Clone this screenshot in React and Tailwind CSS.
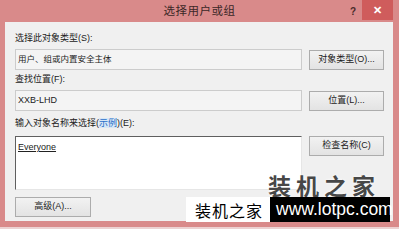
import React from "react";

const font = { fontFamily: '"Liberation Sans","Noto Sans CJK SC",sans-serif' };

function Btn({ children, className = "" }) {
  return (
    <div
      className={
        "h-[20px] flex items-center justify-center border border-[#acacac] bg-gradient-to-b from-[#f2f2f2] to-[#e3e3e3] text-[9px] text-[#222] " +
        className
      }
    >
      {children}
    </div>
  );
}

export default function App() {
  return (
    <div
      className="w-[399px] h-[229px] bg-[#d98a8a] flex flex-col relative overflow-hidden"
      style={font}
    >
      {/* title bar */}
      <div className="h-[22px] grid grid-cols-[1fr_auto_1fr] items-center shrink-0">
        <div />
        <div className="text-[11.5px] text-[#3b2727] tracking-[0.5px] pt-[1px]">选择用户或组</div>
        <div className="flex justify-end items-start h-full">
          <div className="text-[10px] font-bold text-[#4a2a2a] mt-[4px] mr-[6px]">?</div>
          <div className="w-[31px] h-[20px] bg-[#cf5c5c] flex items-center justify-center text-white text-[11px] font-bold mr-[6px]">
            ✕
          </div>
        </div>
      </div>

      {/* body */}
      <div className="flex-1 ml-[5px] mr-[6px] mb-[8px] bg-[#f0f0f0] pl-[10px] pr-[9px] pt-[10px] flex flex-col">
        <div className="h-[12px] leading-[12px] text-[9px] text-[#222]">选择此对象类型(S):</div>
        <div className="flex items-center gap-[7px] mt-[5px]">
          <div className="w-[287px] h-[21px] border border-[#cccccc] bg-[#f4f4f4] flex items-center pl-[2px] text-[8.5px] text-[#222]">
            用户、组或内置安全主体
          </div>
          <Btn className="w-[75px]">对象类型(O)...</Btn>
        </div>

        <div className="h-[12px] leading-[12px] text-[9px] text-[#222] mt-[3px]">查找位置(F):</div>
        <div className="flex items-center gap-[7px] mt-[5px]">
          <div className="w-[287px] h-[21px] border border-[#cccccc] bg-[#f4f4f4] flex items-center pl-[2px] text-[9px] text-[#222]">
            XXB-LHD
          </div>
          <Btn className="w-[75px]">位置(L)...</Btn>
        </div>

        <div className="h-[12px] leading-[12px] text-[9px] text-[#222] mt-[6px]">
          输入对象名称来选择(
          <span className="text-[#2a6fc9] bg-[#d7e6f5]">示例</span>
          )(E):
        </div>
        <div className="flex items-start gap-[7px] mt-[7px]">
          <div className="w-[287px] h-[54px] border-t border-l border-t-[#5f5f5f] border-l-[#5f5f5f] border-r border-b border-r-[#e6e6e6] border-b-[#e6e6e6] bg-white pl-[2px] pt-[4px] text-[9px] text-[#222]">
            <span className="underline">Everyone</span>
          </div>
          <Btn className="w-[75px]">检查名称(C)</Btn>
        </div>

        <div className="flex mt-[7px]">
          <Btn className="w-[76px]">高级(A)...</Btn>
        </div>
      </div>
      <div className="absolute left-0 right-0 bottom-0 h-[2px] bg-[#ecd2d2]" />

      {/* watermark */}
      <div
        className="absolute left-[268px] top-[173px] text-[23px] font-bold text-[#474747] tracking-[5px] leading-[24px]"
        style={{ fontFamily: '"Noto Sans CJK SC",sans-serif', textShadow: "0 0 3px #ffffff" }}
      >
        装机之家
      </div>
      <div
        className="absolute left-[186px] top-[197px] w-[84px] h-[25px] bg-white flex items-center pl-[9px] text-[16px] text-black tracking-[1px]"
        style={{ fontFamily: '"Noto Sans CJK SC",sans-serif' }}
      >
        装机之家
      </div>
      <div className="absolute left-[270px] top-[197px] w-[120px] h-[25px] bg-black flex items-center pl-[6px] text-[17.5px] text-white">
        www.lotpc.com
      </div>
    </div>
  );
}
